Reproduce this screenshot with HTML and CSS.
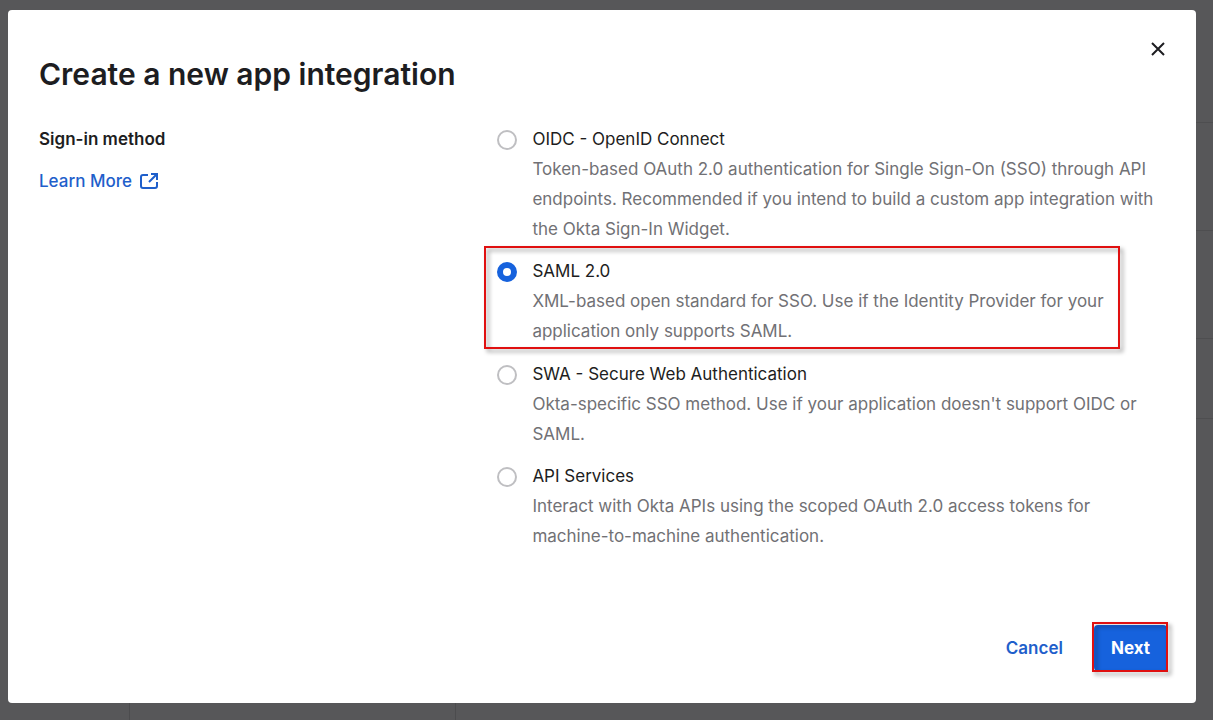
FILE: index.html
```html
<!DOCTYPE html>
<html lang="en">
<head>
  <meta charset="UTF-8">
  <meta name="viewport" content="width=device-width, initial-scale=1.0">
  <title>Create a new app integration</title>
  <link rel="stylesheet" href="styles.css">
</head>
<body>
  <div class="backdrop" aria-hidden="true">
    <div class="backdrop-nav"></div>
    <div class="backdrop-filters"></div>
    <div class="backdrop-list">
      <div class="backdrop-header"></div>
      <div class="backdrop-row"></div>
      <div class="backdrop-row"></div>
      <div class="backdrop-row short"></div>
    </div>
  </div>

  <form class="modal" role="dialog" aria-labelledby="modalTitle">
    <button type="button" class="close" aria-label="Close">
      <svg width="14" height="14" viewBox="0 0 14 14" fill="none" stroke="currentColor" stroke-width="2">
        <path d="M1 1l12 12M13 1L1 13"/>
      </svg>
    </button>

    <h1 id="modalTitle">Create a new app integration</h1>

    <div class="content">
      <div class="intro">
        <h2 id="methodTitle">Sign-in method</h2>
        <a class="learn-more" href="#">Learn More
          <svg width="18" height="16" viewBox="0 0 18 16" fill="none" stroke="currentColor" stroke-width="2">
            <path d="M8 2H3a2 2 0 0 0-2 2v9a2 2 0 0 0 2 2h12a2 2 0 0 0 2-2V9"/>
            <path d="M9 9l7-7M11 1h6v6"/>
          </svg>
        </a>
      </div>

      <div class="options" role="radiogroup" aria-labelledby="methodTitle">
        <div class="option">
          <input type="radio" name="method" id="oidc">
          <div class="option-text">
            <label for="oidc">OIDC - OpenID Connect</label>
            <p>Token-based OAuth 2.0 authentication for Single Sign-On (SSO) through API endpoints. Recommended if you intend to build a custom app integration with the Okta Sign-In Widget.</p>
          </div>
        </div>
        <div class="option highlight">
          <input type="radio" name="method" id="saml" checked>
          <div class="option-text">
            <label for="saml">SAML 2.0</label>
            <p>XML-based open standard for SSO. Use if the Identity Provider for your application only supports SAML.</p>
          </div>
        </div>
        <div class="option">
          <input type="radio" name="method" id="swa">
          <div class="option-text">
            <label for="swa">SWA - Secure Web Authentication</label>
            <p>Okta-specific SSO method. Use if your application doesn't support OIDC or SAML.</p>
          </div>
        </div>
        <div class="option">
          <input type="radio" name="method" id="api">
          <div class="option-text">
            <label for="api">API Services</label>
            <p>Interact with Okta APIs using the scoped OAuth 2.0 access tokens for machine-to-machine authentication.</p>
          </div>
        </div>
      </div>
    </div>

    <div class="actions">
      <button type="button" class="cancel">Cancel</button>
      <div class="highlight next-wrap">
        <button type="submit" class="next">Next</button>
      </div>
    </div>
  </form>
</body>
</html>
```
FILE: styles.css
```css
* {
  box-sizing: border-box;
}

body {
  margin: 0;
  padding: 10px 17px 17px 8px;
  background-color: #575759;
  font-family: "Inter", "Liberation Sans", sans-serif;
  font-size: 17px;
  line-height: 30px;
  color: #1d1d21;
}

h1, h2, p {
  margin: 0;
}

/* Dimmed page behind the dialog */
.backdrop {
  position: fixed;
  inset: 0;
  z-index: -1;
  display: grid;
  grid-template-columns: 130px 326px 1fr;
}

.backdrop-nav,
.backdrop-filters {
  margin-top: 123px;
  border-right: 1px solid #4c4c4e;
}

.backdrop-header,
.backdrop-row {
  height: 108px;
  border-bottom: 1px solid #4e4e50;
}

.backdrop-header {
  height: 123px;
}

.backdrop-row.short {
  height: 80px;
}

/* Dialog */
.modal {
  position: relative;
  padding: 44px 29px 32px 31px;
  background-color: #fff;
  border-radius: 4px;
}

.close {
  position: absolute;
  top: 24px;
  right: 23px;
  display: flex;
  padding: 8px;
  border: none;
  background: none;
  color: #1d1d21;
  cursor: pointer;
}

h1 {
  margin-bottom: 30px;
  font-size: 30px;
  line-height: 40px;
  font-weight: 600;
}

.content {
  display: grid;
  grid-template-columns: 2fr 3fr;
  gap: 12px;
}

h2 {
  margin-bottom: 12px;
  font-size: 17px;
  font-weight: 600;
}

.learn-more {
  display: inline-flex;
  align-items: center;
  gap: 8px;
  color: #1f5fcb;
  font-weight: 500;
  text-decoration: none;
}

/* Sign-in options */
.options {
  display: flex;
  flex-direction: column;
  gap: 12px;
}

.option {
  display: flex;
  gap: 15px;
}

.option.highlight {
  margin-bottom: 1px;
}

.option input {
  appearance: none;
  flex: none;
  width: 20px;
  height: 20px;
  margin: 6px 0 0;
  border: 2px solid #bfbfc2;
  border-radius: 50%;
  background-color: #fff;
}

.option input:checked {
  border: 6px solid #1662dd;
}

.option-text label {
  display: block;
}

.option-text p {
  color: #717175;
}

/* Red call-out frame */
.highlight {
  position: relative;
}

.highlight::after {
  content: "";
  position: absolute;
  inset: -10px 47px -3px -13px;
  border: 2px solid #e01010;
  filter: drop-shadow(3px 3px 2px rgba(0, 0, 0, 0.4));
  pointer-events: none;
}

.next-wrap::after {
  inset: -3px -1px -1px -2px;
}

/* Footer */
.actions {
  display: flex;
  justify-content: flex-end;
  align-items: center;
  gap: 15px;
  margin-top: 74px;
}

.actions button {
  display: block;
  padding: 8px 16px;
  border: none;
  border-radius: 4px;
  font: inherit;
  font-weight: 600;
  cursor: pointer;
}

.actions .cancel {
  background: none;
  color: #1f5fcb;
}

.actions .next {
  padding: 8px 17px;
  background-color: #1662dd;
  color: #fff;
  font-weight: 700;
}
```
